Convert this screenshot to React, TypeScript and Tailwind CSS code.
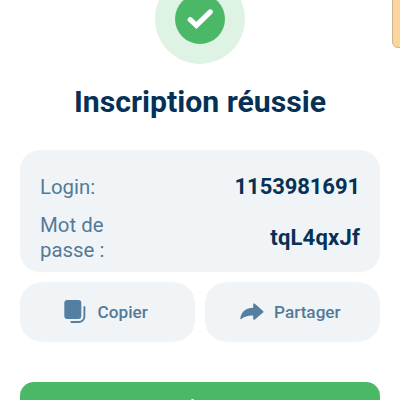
import type { ReactNode } from 'react'

const credentials = [
  { label: 'Login:', value: '1153981691', spacing: 'tracking-[-0.08px]' },
  { label: 'Mot de passe :', value: 'tqL4qxJf', spacing: 'tracking-[0.2px]' },
]

function CheckIcon() {
  return (
    <svg width="50" height="50" viewBox="0 0 50 50" fill="none">
      <path d="M15.200 25.700l6.200 5.700 13.900-13.500" stroke="#fff" strokeWidth="5.200" strokeLinecap="round" strokeLinejoin="miter" />
    </svg>
  )
}

function CopyIcon() {
  return (
    <svg width="22" height="24" viewBox="0 0 22 24" fill="none">
      <rect x="0.3" y="0" width="17" height="19" rx="3" fill="#547fa3" />
      <path d="M20.4 7v9.500a5.500 5.500 0 0 1-5.500 5.500H7.400" stroke="#547fa3" strokeWidth="1.9" strokeLinecap="round" />
    </svg>
  )
}

function ShareIcon() {
  return (
    <svg width="24" height="18" viewBox="0 0 24 18" fill="#547fa3">
      <path d="M13.2 1.500c0-.9 1-1.400 1.700-.8l8.200 7.200c.5.5.5 1.200 0 1.700l-8.200 7c-.7.6-1.700.1-1.700-.8v-3.400C8 12.200 4.400 13.400 1.200 16c-.5.4-1 .1-.9-.5C1 9.300 5.800 4.900 13.200 4.800z" />
    </svg>
  )
}

function ActionButton({ icon, children }: { icon: ReactNode; children: ReactNode }) {
  return (
    <button className="flex h-[60px] flex-1 items-center rounded-[22px] bg-[#f0f4f7] text-[17.200px] font-medium text-[#547a97]">
      {icon}
      <span className="pt-0.5">{children}</span>
    </button>
  )
}

export default function App() {
  return (
    <div className="relative flex h-[400px] w-[400px] flex-col overflow-hidden bg-white px-5 font-['Roboto',sans-serif]">
      <div className="absolute -top-4 left-[392px] h-16 w-5 rounded-[6px] border border-[#c9b594] bg-[#fbd59b]" />

      <div className="-mt-[26px] flex size-[90px] shrink-0 items-center justify-center self-center rounded-full bg-[#dff3e5]">
        <div className="size-[50px] rounded-full bg-[#4bb868]">
          <CheckIcon />
        </div>
      </div>

      <h1 className="mt-5 text-center text-[30.2px] leading-[35px] font-bold text-[#063156]">Inscription réussie</h1>

      <div className="mt-[31px] flex h-[122px] shrink-0 flex-col gap-[13px] rounded-[20px] bg-[#f0f4f7] px-5 pt-6">
        {credentials.map(({ label, value, spacing }) => (
          <div key={label} className="flex items-center justify-between">
            <span className="-mb-px w-20 pt-px text-[20.4px] leading-[25px] text-[#547a97]">{label}</span>
            <span className={`text-[22px] leading-[25px] font-bold text-[#063156] ${spacing}`}>{value}</span>
          </div>
        ))}
      </div>

      <div className="mt-[9.5px] flex gap-[10px]">
        <ActionButton icon={<span className="mr-[11.5px] ml-11"><CopyIcon /></span>}>Copier</ActionButton>
        <ActionButton icon={<span className="mr-[10px] ml-[35px]"><ShareIcon /></span>}>Partager</ActionButton>
      </div>

      <div className="mt-10 h-[60px] shrink-0 rounded-[14px] bg-[#4bb868] pt-[17px]">
        <div className="ml-[171px] size-[3px] rounded-full bg-white" />
      </div>
    </div>
  )
}
